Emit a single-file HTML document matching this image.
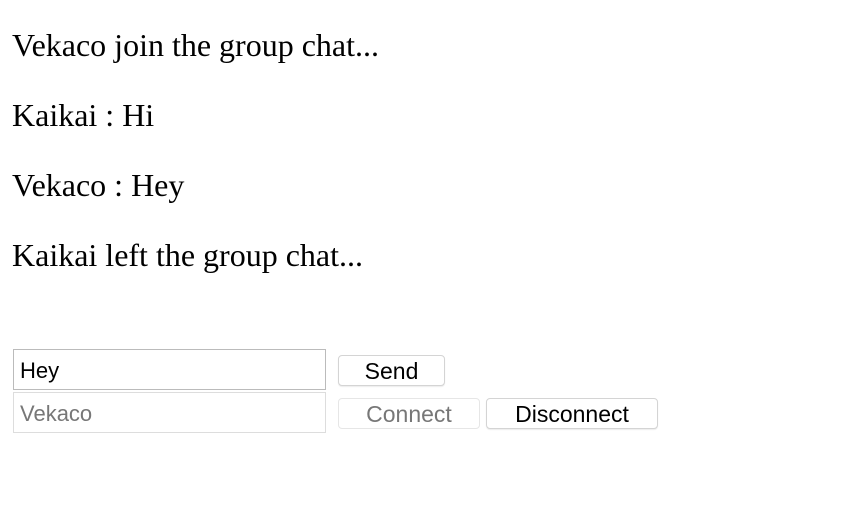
<!DOCTYPE html>
<html><head><style>
body{margin:0;width:856px;height:506px;background:#fff;position:relative;font-family:"Liberation Serif",serif;}
.l{position:absolute;left:12px;font-size:32px;line-height:32px;color:#000;white-space:nowrap}
.in{position:absolute;left:13px;border:1px solid #bbb;font-family:"Liberation Sans",sans-serif;font-size:22px;line-height:41px;padding-left:6px;box-sizing:border-box;width:313px;height:41px}
.b{position:absolute;height:31px;border:1px solid #d4d4d4;border-radius:4px;background:#fff;font-family:"Liberation Sans",sans-serif;font-size:23px;line-height:30px;text-align:center;box-sizing:border-box;box-shadow:0 1px 1px rgba(0,0,0,.08)}
</style></head><body>
<div class="l" style="top:29px">Vekaco join the group chat...</div>
<div class="l" style="top:99px">Kaikai : Hi</div>
<div class="l" style="top:169px">Vekaco : Hey</div>
<div class="l" style="top:239px">Kaikai left the group chat...</div>
<div class="in" style="top:349px;color:#000">Hey</div>
<div class="in" style="top:392px;color:#777;border-color:#ddd">Vekaco</div>
<div class="b" style="left:338px;top:355px;width:107px">Send</div>
<div class="b" style="left:338px;top:398px;width:142px;color:#777;border-color:#e6e6e6;box-shadow:none">Connect</div>
<div class="b" style="left:486px;top:398px;width:172px">Disconnect</div>
</body></html>
